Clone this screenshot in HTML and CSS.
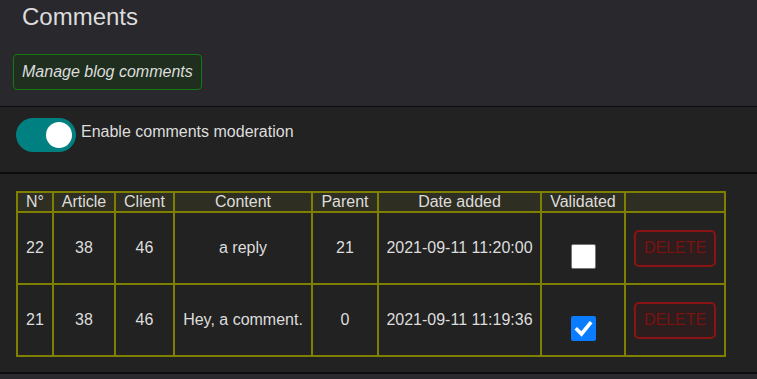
FILE: index.html
```html
<!DOCTYPE html>
<html>
<head>
<meta charset="utf-8">
<link rel="stylesheet" href="styles.css">
</head>
<body>
<section class="head">
  <h1 class="title">Comments</h1>
  <button class="manage">Manage blog comments</button>
</section>
<section class="moderation">
  <label class="switch"><span class="knob"></span></label>
  <span class="mod-label">Enable comments moderation</span>
</section>
<section class="list">
  <table class="grid">
    <colgroup>
      <col class="c1"><col class="c2"><col class="c3"><col class="c4"><col class="c5"><col class="c6"><col class="c7"><col class="c8">
    </colgroup>
    <thead>
      <tr><th>N°</th><th>Article</th><th>Client</th><th>Content</th><th>Parent</th><th>Date added</th><th>Validated</th><th></th></tr>
    </thead>
    <tbody>
      <tr>
        <td>22</td><td>38</td><td>46</td><td>a reply</td><td>21</td><td>2021-09-11 11:20:00</td>
        <td><span class="box"></span></td>
        <td><button class="delete">DELETE</button></td>
      </tr>
      <tr>
        <td>21</td><td>38</td><td>46</td><td>Hey, a comment.</td><td>0</td><td>2021-09-11 11:19:36</td>
        <td><span class="box checked"><svg viewBox="0 0 25 25" width="25" height="25"><path d="M6 13.5 L10.5 18 L19 7.5" fill="none" stroke="#fff" stroke-width="3.6" stroke-linecap="square"/></svg></span></td>
        <td><button class="delete">DELETE</button></td>
      </tr>
    </tbody>
  </table>
</section>
<section class="rest"></section>
</body>
</html>
```
FILE: styles.css
```css
html, body {
  margin: 0;
  padding: 0;
  background: #2a2a2e;
  font-family: "Liberation Sans", Arial, sans-serif;
  color: #dddddd;
}
.head {
  background: #29282d;
  padding: 3px 13px 16px;
  border-bottom: 1px solid #0c0c0c;
  display: flex;
  flex-direction: column;
  align-items: flex-start;
}
.title {
  margin: 0 0 23px 9px;
  font-size: 24px;
  font-weight: normal;
  line-height: 28px;
  color: #dcdcdc;
}
.manage {
  font-family: "Liberation Sans", Arial, sans-serif;
  font-style: italic;
  font-size: 16px;
  line-height: 18px;
  color: #dddddd;
  background: #1f2e1f;
  border: 1px solid #137a13;
  border-radius: 4px;
  padding: 8px 8px;
}
.moderation {
  background: #222222;
  padding: 11px 16px 20px;
  border-bottom: 2px solid #0c0c0c;
  display: flex;
  align-items: flex-start;
  gap: 5px;
}
.switch {
  position: relative;
  width: 60px;
  height: 34px;
  border-radius: 17px;
  background: #008080;
  flex: none;
}
.knob {
  position: absolute;
  left: 30px;
  top: 4px;
  width: 26px;
  height: 26px;
  border-radius: 50%;
  background: #ffffff;
}
.mod-label {
  font-size: 16px;
  line-height: 18px;
  margin-top: 5px;
}
.list {
  background: #222222;
  padding: 17px 16px 15px;
  border-bottom: 2px solid #0c0c0c;
}
.grid {
  border-collapse: collapse;
  table-layout: fixed;
  width: 710px;
  font-size: 16px;
  color: #dddddd;
}
.grid th, .grid td {
  border: 2px solid #7f7f00;
  text-align: center;
  vertical-align: middle;
  padding: 0;
  line-height: 18px;
}
.grid th {
  background: #2f2e22;
  font-weight: normal;
}
.grid tbody tr {
  height: 72px;
}
.c1 { width: 36px; }
.c2 { width: 62px; }
.c3 { width: 59px; }
.c4 { width: 138px; }
.c5 { width: 66px; }
.c6 { width: 163px; }
.c7 { width: 84px; }
.c8 { width: 100px; }
.box {
  display: block;
  width: 23px;
  height: 23px;
  margin: 17px auto 0;
  background: #ffffff;
  border: 1px solid #767676;
  border-radius: 2px;
}
.box.checked {
  width: 25px;
  height: 25px;
  border: none;
  background: #0a7cff;
}
.box svg {
  display: block;
}
.delete {
  font-family: "Liberation Sans", Arial, sans-serif;
  font-size: 16px;
  color: #7a1212;
  background: #2c1e1e;
  border: 2px solid #8a1414;
  border-radius: 5px;
  width: 82px;
  height: 37px;
  padding: 0;
  margin: 0 auto;
  display: block;
}
.rest {
  height: 5px;
}
```
